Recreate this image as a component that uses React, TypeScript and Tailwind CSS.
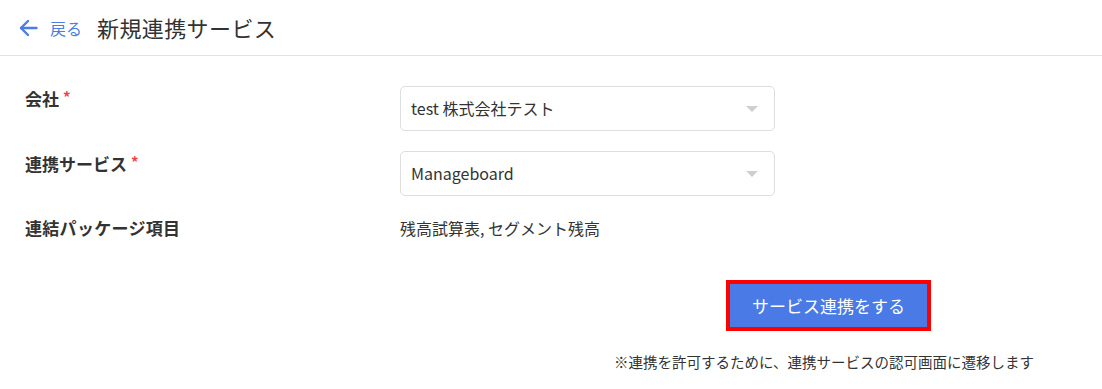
import React from "react";

const font = { fontFamily: '"Noto Sans CJK JP", "Noto Sans", sans-serif' };

function Select({ value }: { value: string }) {
  return (
    <div className="flex h-[45px] w-[375px] items-center justify-between rounded-[5px] border border-[#dedede] bg-white pl-[10px] pr-[16px]">
      <span className="relative -top-[1px] text-[16px] text-[#333]">{value}</span>
      <svg width="12" height="6" viewBox="0 0 12 6" className="mt-[1px]">
        <path d="M0 0 L12 0 L6 6 Z" fill="#cfcfcf" />
      </svg>
    </div>
  );
}

function Star() {
  return <span className="relative top-[2px] ml-[4px] align-top text-[15px] font-bold leading-[18px] text-[#ef4444]">*</span>;
}

export default function App() {
  return (
    <div className="min-h-[389px] w-[1102px] bg-white text-[#333]" style={font}>
      <header className="flex h-[56px] items-center border-b border-[#e2e2e2] pl-[19px]">
        <a className="flex items-center gap-[12px] text-[#4a7de5]">
          <svg width="19" height="18" viewBox="0 0 19 18" fill="none" stroke="#4a7de5" strokeWidth="2.4" strokeLinecap="round" strokeLinejoin="round">
            <path d="M17.5 9 H2" />
            <path d="M9 2 L2 9 L9 16" />
          </svg>
          <span className="text-[16px] font-normal">戻る</span>
        </a>
        <h1 className="ml-[15px] text-[22px] font-normal tracking-[0.4px] text-[#333]">新規連携サービス</h1>
      </header>

      <div className="px-[25px] pt-[30px]">
        <div className="flex">
          <div className="w-[375px] text-[17px] font-bold leading-[26px]">
            会社<Star />
          </div>
          <Select value="test 株式会社テスト" />
        </div>
        <div className="mt-[20px] flex">
          <div className="w-[375px] text-[17px] font-bold leading-[26px]">
            連携サービス<Star />
          </div>
          <Select value="Manageboard" />
        </div>
        <div className="mt-[20px] flex items-center">
          <div className="w-[375px] text-[17px] font-bold leading-[24px] tracking-[0.3px]">連結パッケージ項目</div>
          <div className="text-[16px] leading-[24px] text-[#333]">残高試算表, セグメント残高</div>
        </div>

        <div className="mt-[44px] flex flex-col items-start pl-[589px]">
          <button className="ml-[116px] h-[43px] w-[197px] bg-[#4a7ae6] text-[17px] text-white outline outline-[4px] outline-[#ff0000]">
            サービス連携をする
          </button>
          <p className="mt-[24px] text-[14.5px] leading-[22px] text-[#333]">
            ※連携を許可するために、連携サービスの認可画面に遷移します
          </p>
        </div>
      </div>
    </div>
  );
}
